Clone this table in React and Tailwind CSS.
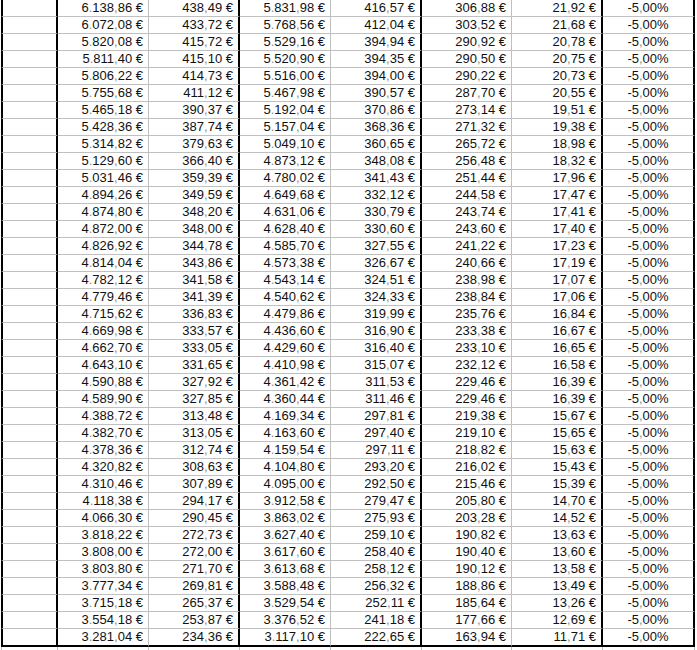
import React from "react";

const rows = [
  ["6.138,86", "438,49", "5.831,98", "416,57", "306,88", "21,92"],
  ["6.072,08", "433,72", "5.768,56", "412,04", "303,52", "21,68"],
  ["5.820,08", "415,72", "5.529,16", "394,94", "290,92", "20,78"],
  ["5.811,40", "415,10", "5.520,90", "394,35", "290,50", "20,75"],
  ["5.806,22", "414,73", "5.516,00", "394,00", "290,22", "20,73"],
  ["5.755,68", "411,12", "5.467,98", "390,57", "287,70", "20,55"],
  ["5.465,18", "390,37", "5.192,04", "370,86", "273,14", "19,51"],
  ["5.428,36", "387,74", "5.157,04", "368,36", "271,32", "19,38"],
  ["5.314,82", "379,63", "5.049,10", "360,65", "265,72", "18,98"],
  ["5.129,60", "366,40", "4.873,12", "348,08", "256,48", "18,32"],
  ["5.031,46", "359,39", "4.780,02", "341,43", "251,44", "17,96"],
  ["4.894,26", "349,59", "4.649,68", "332,12", "244,58", "17,47"],
  ["4.874,80", "348,20", "4.631,06", "330,79", "243,74", "17,41"],
  ["4.872,00", "348,00", "4.628,40", "330,60", "243,60", "17,40"],
  ["4.826,92", "344,78", "4.585,70", "327,55", "241,22", "17,23"],
  ["4.814,04", "343,86", "4.573,38", "326,67", "240,66", "17,19"],
  ["4.782,12", "341,58", "4.543,14", "324,51", "238,98", "17,07"],
  ["4.779,46", "341,39", "4.540,62", "324,33", "238,84", "17,06"],
  ["4.715,62", "336,83", "4.479,86", "319,99", "235,76", "16,84"],
  ["4.669,98", "333,57", "4.436,60", "316,90", "233,38", "16,67"],
  ["4.662,70", "333,05", "4.429,60", "316,40", "233,10", "16,65"],
  ["4.643,10", "331,65", "4.410,98", "315,07", "232,12", "16,58"],
  ["4.590,88", "327,92", "4.361,42", "311,53", "229,46", "16,39"],
  ["4.589,90", "327,85", "4.360,44", "311,46", "229,46", "16,39"],
  ["4.388,72", "313,48", "4.169,34", "297,81", "219,38", "15,67"],
  ["4.382,70", "313,05", "4.163,60", "297,40", "219,10", "15,65"],
  ["4.378,36", "312,74", "4.159,54", "297,11", "218,82", "15,63"],
  ["4.320,82", "308,63", "4.104,80", "293,20", "216,02", "15,43"],
  ["4.310,46", "307,89", "4.095,00", "292,50", "215,46", "15,39"],
  ["4.118,38", "294,17", "3.912,58", "279,47", "205,80", "14,70"],
  ["4.066,30", "290,45", "3.863,02", "275,93", "203,28", "14,52"],
  ["3.818,22", "272,73", "3.627,40", "259,10", "190,82", "13,63"],
  ["3.808,00", "272,00", "3.617,60", "258,40", "190,40", "13,60"],
  ["3.803,80", "271,70", "3.613,68", "258,12", "190,12", "13,58"],
  ["3.777,34", "269,81", "3.588,48", "256,32", "188,86", "13,49"],
  ["3.715,18", "265,37", "3.529,54", "252,11", "185,64", "13,26"],
  ["3.554,18", "253,87", "3.376,52", "241,18", "177,66", "12,69"],
  ["3.281,04", "234,36", "3.117,10", "222,65", "163,94", "11,71"],
];

function Num({ v, suffix }) {
  const parts = v.split(/([.,])/);
  return (
    <span>
      {parts.map((p, i) =>
        p === "." || p === "," ? (
          <span key={i} className="text-[#8c8c8c]">
            {p}
          </span>
        ) : (
          <span key={i}>{p}</span>
        )
      )}
      {suffix}
    </span>
  );
}

const valueCols = [
  "w-[91px] border-r border-[#c0c0c0]",
  "w-[91px] border-r-2 border-black",
  "w-[91px] border-r border-[#c0c0c0]",
  "w-[91px] border-r-2 border-black",
  "w-[90px] border-r border-[#c0c0c0]",
  "w-[91px] border-r-2 border-black",
];

function Row({ r, last }) {
  const bottom = last
    ? "h-[18px] border-b-2 border-b-black"
    : "h-[17px] border-b border-b-[#c0c0c0]";
  return (
    <div className="flex pl-[1px]">
      <div className={`w-[57px] shrink-0 border-l-2 border-r-2 border-black ${bottom}`} />
      {r.map((v, i) => (
        <div
          key={i}
          className={`${valueCols[i]} shrink-0 ${bottom} flex justify-end pr-[5px] leading-[16px]`}
        >
          <Num v={v} suffix=" €" />
        </div>
      ))}
      <div
        className={`w-[92px] shrink-0 border-r-2 border-black ${bottom} flex justify-center leading-[16px]`}
      >
        <Num v="-5,00" suffix="%" />
      </div>
    </div>
  );
}

export default function App() {
  return (
    <div
      className="w-[697px] h-[650px] overflow-hidden bg-white text-[13px] text-[#111]"
      style={{ fontFamily: '"Liberation Sans", Arial, sans-serif' }}
    >
      {rows.map((r, i) => (
        <Row key={i} r={r} last={i === rows.length - 1} />
      ))}
      <div className="flex h-[10px] pl-[1px]">
        <div className="w-[57px] shrink-0 border-l border-r border-[#c0c0c0]" />
        <div className="w-[91px] shrink-0 border-r border-[#c0c0c0]" />
        <div className="w-[91px] shrink-0 border-r border-[#c0c0c0]" />
        <div className="w-[91px] shrink-0 border-r border-[#c0c0c0]" />
        <div className="w-[91px] shrink-0 border-r border-[#c0c0c0]" />
        <div className="w-[90px] shrink-0 border-r border-[#c0c0c0]" />
        <div className="w-[91px] shrink-0 border-r border-[#c0c0c0]" />
        <div className="w-[92px] shrink-0 border-r border-[#c0c0c0]" />
      </div>
    </div>
  );
}
